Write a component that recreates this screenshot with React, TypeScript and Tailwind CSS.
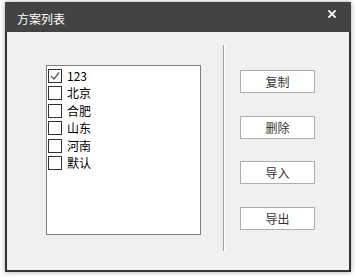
import React from "react";

const items = [
  { label: "123", checked: true },
  { label: "北京", checked: false },
  { label: "合肥", checked: false },
  { label: "山东", checked: false },
  { label: "河南", checked: false },
  { label: "默认", checked: false },
];

const buttons = ["复制", "删除", "导入", "导出"];

const font = { fontFamily: '"Noto Sans CJK SC", "Noto Sans", sans-serif' };

export default function App() {
  return (
    <div className="w-[355px] h-[277px] bg-white overflow-hidden" style={font}>
      <div className="ml-[5px] mt-[2px] w-[346px] h-[270px] flex flex-col shadow-[0_0_5px_rgba(0,0,0,0.35)]">
        <div className="h-[30px] bg-[#434343] flex items-start justify-between shrink-0">
          <div className="pl-[12px] pt-[10px] text-[12px] leading-[14px] text-white">方案列表</div>
          <svg width="8" height="8" viewBox="0 0 8 8" className="mt-[8px] mr-[15px]">
            <path d="M1 1 L7 7 M7 1 L1 7" stroke="white" strokeWidth="1.8" strokeLinecap="square" />
          </svg>
        </div>
        <div className="flex-1 bg-[#f0f0f0] border-x-2 border-b-2 border-[#333333] flex pl-[39px]">
          <div className="mt-[33px] w-[155px] h-[170px] bg-white border border-[#7a8088] pt-[3px] pl-[1px] shrink-0">
            {items.map((it) => (
              <div key={it.label} className="h-[17.4px] flex items-start">
                <div className="w-[14px] h-[14px] border border-[#333333] bg-white flex items-center justify-center shrink-0">
                  {it.checked && (
                    <svg width="12" height="12" viewBox="0 0 12 12">
                      <path d="M2 6 L5 9 L10 2.5" stroke="#555555" strokeWidth="1.3" fill="none" />
                    </svg>
                  )}
                </div>
                <span className="ml-[5px] text-[12px] leading-[14px] text-black">{it.label}</span>
              </div>
            ))}
          </div>
          <div className="ml-[22px] mt-[13px] h-[206px] w-[2px] border-l border-[#a0a0a0] bg-white shrink-0" />
          <div className="ml-[15px] mt-[38px] flex flex-col">
            {buttons.map((b, i) => (
              <div
                key={b}
                className={`w-[75px] h-[23px] bg-white border border-[#adadad] flex items-center justify-center text-[12px] text-[#333333] ${i === 0 ? "" : i === 2 ? "mt-[22px]" : "mt-[23px]"}`}
              >
                {b}
              </div>
            ))}
          </div>
        </div>
      </div>
    </div>
  );
}
